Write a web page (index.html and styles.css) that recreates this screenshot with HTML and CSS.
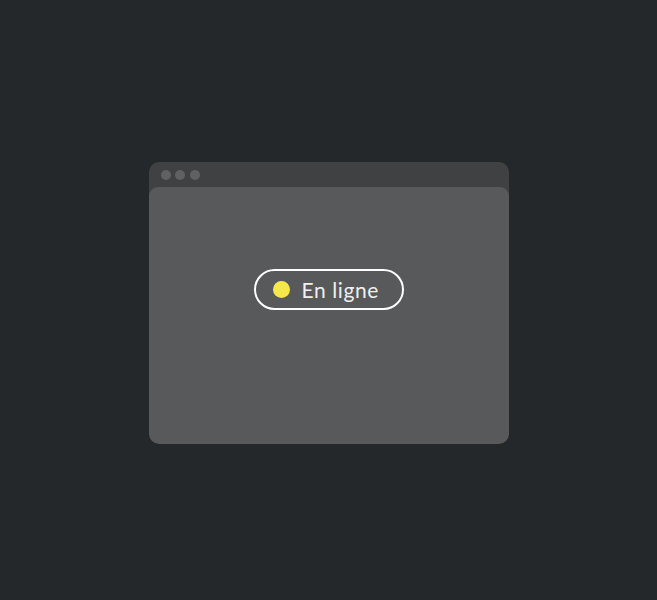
FILE: index.html
```html
<!DOCTYPE html>
<html lang="fr">
<head>
<meta charset="utf-8">
<link rel="stylesheet" href="styles.css">
</head>
<body>
<div class="stage">
  <div class="window">
    <div class="titlebar">
      <span class="dot"></span><span class="dot"></span><span class="dot"></span>
    </div>
    <div class="panel">
      <div class="pill">
        <span class="status"></span>
        <span class="label">En ligne</span>
      </div>
    </div>
  </div>
</div>
</body>
</html>
```
FILE: styles.css
```css
html, body {
  margin: 0;
  padding: 0;
  background: #25282b;
  height: 100%;
}
.stage {
  height: 600px;
  display: flex;
  justify-content: center;
  padding-top: 162px;
  box-sizing: border-box;
}
.window {
  width: 360px;
  height: 282px;
  background: #3f4142;
  border-radius: 10px;
  display: flex;
  flex-direction: column;
  overflow: hidden;
}
.titlebar {
  height: 25px;
  display: flex;
  align-items: center;
  gap: 4.5px;
  padding-left: 12px;
  box-sizing: border-box;
}
.dot {
  width: 10px;
  height: 10px;
  border-radius: 50%;
  background: #606163;
}
.panel {
  flex: 1;
  background: #58595b;
  border-radius: 9px 9px 10px 10px;
  display: flex;
  justify-content: center;
  align-items: flex-start;
  padding-top: 82px;
}
.pill {
  width: 150px;
  height: 41px;
  box-sizing: border-box;
  border: 2px solid #ffffff;
  border-radius: 21px;
  display: flex;
  align-items: center;
  padding-left: 17px;
  gap: 12px;
}
.status {
  width: 17px;
  height: 17px;
  border-radius: 50%;
  background: #f6e84a;
}
.label {
  font-family: Lato, "Open Sans", sans-serif;
  font-size: 21px;
  color: #f0f0f0;
  letter-spacing: 0.6px;
}
```
